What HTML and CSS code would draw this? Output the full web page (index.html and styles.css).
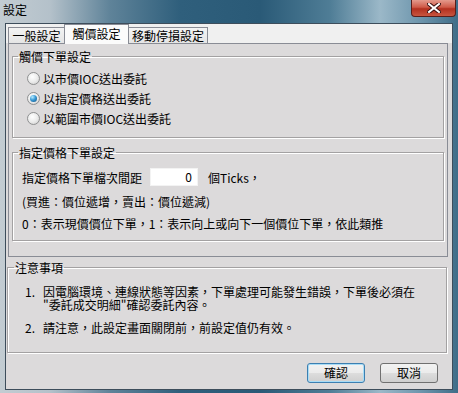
FILE: index.html
```html
<!DOCTYPE html>
<html lang="zh-Hant">
<head>
    <meta charset="UTF-8">
    <title>設定</title>
    <link rel="stylesheet" href="styles.css">
</head>
<body>
    <div class="window">
        <div class="titlebar">
            <span class="title">設定</span>
            <div class="close">
                <svg width="14" height="10" viewBox="0 0 14 10">
                    <path d="M2 1 L12 9 M12 1 L2 9" stroke="#3a1010" stroke-width="4" stroke-linecap="square"/>
                    <path d="M2 1 L12 9 M12 1 L2 9" stroke="#ffffff" stroke-width="2" stroke-linecap="square"/>
                </svg>
            </div>
        </div>

        <div class="client">
            <div class="tabs">
                <div class="tab tab-first">一般設定</div>
                <div class="tab tab-active">觸價設定</div>
                <div class="tab tab-last">移動停損設定</div>
            </div>

            <div class="tabpage">
                <fieldset class="group group-trigger">
                    <legend>觸價下單設定</legend>
                    <div class="group-body">
                        <div class="radio-row"><span class="radio"></span><span>以市價IOC送出委託</span></div>
                        <div class="radio-row"><span class="radio checked"></span><span>以指定價格送出委託</span></div>
                        <div class="radio-row"><span class="radio"></span><span>以範圍市價IOC送出委託</span></div>
                    </div>
                </fieldset>

                <fieldset class="group group-price">
                    <legend>指定價格下單設定</legend>
                    <div class="group-body">
                        <div class="tick-row">
                            <span>指定價格下單檔次間距</span>
                            <div class="textbox">0</div>
                            <span class="unit">個Ticks，</span>
                        </div>
                        <div class="hint">(買進：價位遞增，賣出：價位遞減)</div>
                        <div class="hint">0：表示現價價位下單，1：表示向上或向下一個價位下單，依此類推</div>
                    </div>
                </fieldset>
            </div>

            <fieldset class="group group-notes">
                <legend>注意事項</legend>
                <div class="group-body">
                    <div class="note">
                        <span class="num">1.</span>
                        <div class="note-text">
                            <div>因電腦環境、連線狀態等因素，下單處理可能發生錯誤，下單後必須在</div>
                            <div>"委託成交明細"確認委託內容。</div>
                        </div>
                    </div>
                    <div class="note">
                        <span class="num">2.</span>
                        <div class="note-text">請注意，此設定畫面關閉前，前設定值仍有效。</div>
                    </div>
                </div>
            </fieldset>

            <div class="buttons">
                <button class="btn btn-default">確認</button>
                <button class="btn">取消</button>
            </div>
        </div>
    </div>
</body>
</html>
```

FILE: styles.css
```css
body {
    margin: 0;
    width: 458px;
    height: 393px;
    overflow: hidden;
    font-family: "Noto Sans CJK TC", "Noto Sans CJK SC", sans-serif;
    font-size: 12px;
    color: #000000;
}

.window {
    height: 393px;
    display: flex;
    flex-direction: column;
    background: linear-gradient(90deg, #c3ccd2 0, #b4c1ca 50px, #5f8399 110px, #2f5f7c 180px, #2a5a77 260px, #4f7d96 330px, #9bb8c8 380px, #6e96ad 420px, #3f6d88 458px);
}

.titlebar {
    height: 23px;
    display: flex;
    align-items: flex-start;
}

.title {
    padding: 2px 0 0 3px;
    line-height: 15px;
}

.close {
    margin-left: auto;
    margin-right: 2px;
    width: 45px;
    height: 17px;
    box-sizing: border-box;
    border: 1px solid #5a1e1a;
    border-top: none;
    border-radius: 0 0 4px 4px;
    background: linear-gradient(#e49a8c 0, #cf5a48 45%, #b3301f 55%, #c8553f 100%);
    display: flex;
    align-items: center;
    justify-content: center;
}

.client {
    flex: 1;
    margin: 0 5px 3px 5px;
    border: 1px solid #3d4d5b;
    background-color: #dcdadb;
    display: flex;
    flex-direction: column;
}

/* tabs */
.tabs {
    height: 19px;
    background-color: #f0f0f0;
    padding-left: 2px;
    display: flex;
    align-items: flex-end;
}

.tab {
    height: 16px;
    box-sizing: border-box;
    border: 1px solid #898c95;
    border-bottom: none;
    background: linear-gradient(#f3f3f3, #e5e5e5);
    line-height: 15px;
    text-align: center;
    position: relative;
}

.tab-first {
    width: 57px;
}

.tab-active {
    width: 65px;
    height: 20px;
    margin: 0 -1px -1px -1px;
    background: #fbfbfb;
    z-index: 1;
    line-height: 17px;
}

.tab-last {
    width: 80px;
}

.tabpage {
    height: 214px;
    box-sizing: border-box;
    margin: 0 4px 0 2px;
    border: 1px solid #898c95;
    background-color: #dcdadb;
    padding: 0 3px;
}

/* group boxes */
.group {
    margin: 0;
    border: 1px solid #a3a1a2;
    box-shadow: inset 1px 1px 0 #ffffff, 1px 1px 0 #ffffff;
    padding: 0;
    min-width: 0;
}

.group legend {
    padding: 0 1px;
    margin-left: 5px;
    line-height: 13px;
}

.group-trigger {
    margin-top: 6px;
}

.group-trigger .group-body {
    padding: 5px 0 9px 14px;
}

.radio-row {
    height: 20px;
    display: flex;
    align-items: center;
    gap: 3px;
}

.radio {
    width: 13px;
    height: 13px;
    box-sizing: border-box;
    border-radius: 50%;
    border: 1px solid #8f9091;
    background: radial-gradient(circle at 40% 35%, #ffffff 0, #ececec 50%, #c9c9c9 100%);
    display: flex;
    align-items: center;
    justify-content: center;
}

.radio.checked::after {
    content: "";
    width: 7px;
    height: 7px;
    border-radius: 50%;
    background: radial-gradient(circle at 35% 30%, #b9ecff 0, #3a9ad6 45%, #0e4f80 100%);
}

.group-price {
    margin-top: 8px;
}

.group-price .group-body {
    padding: 9px 0 10px 9px;
}

.tick-row {
    height: 18px;
    display: flex;
    align-items: center;
}

.textbox {
    width: 48px;
    height: 18px;
    box-sizing: border-box;
    margin-left: 8px;
    background-color: #ffffff;
    border: 1px solid #f3f3f3;
    text-align: right;
    padding-right: 5px;
    line-height: 16px;
}

.unit {
    margin-left: 10px;
}

.hint {
    line-height: 13px;
    margin-top: 9px;
}

.group-notes {
    margin: 4px 5px 0 1px;
}

.group-notes legend {
    margin-left: 6px;
}

.group-notes .group-body {
    padding: 11px 0 18px 17px;
}

.note {
    display: flex;
    line-height: 13px;
}

.note + .note {
    margin-top: 10px;
}

.num {
    width: 18px;
    flex-shrink: 0;
}

/* buttons */
.buttons {
    display: flex;
    justify-content: flex-end;
    gap: 15px;
    padding: 10px 14px 0 0;
}

.btn {
    width: 58px;
    height: 20px;
    box-sizing: border-box;
    border: 1px solid #707070;
    border-radius: 3px;
    background: linear-gradient(#f2f2f2 0, #ebebeb 50%, #dddddd 51%, #cfcfcf 100%);
    font-family: inherit;
    font-size: 12px;
    line-height: 16px;
    padding: 0;
    color: #000000;
}

.btn-default {
    border-color: #3c7fb1;
    box-shadow: inset 0 0 0 1px #a8dcf6;
}
```
